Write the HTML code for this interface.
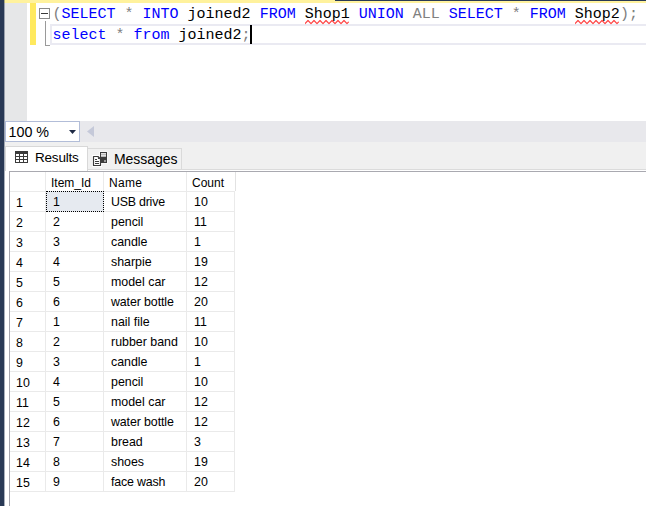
<!DOCTYPE html><html><head><meta charset="utf-8"><title>Query</title><style>
html,body{margin:0;padding:0;}
body{width:646px;height:506px;position:relative;overflow:hidden;background:#fff;font-family:"Liberation Sans",sans-serif;color:#000;}
div,span{position:absolute;box-sizing:border-box;}
.frame{left:0;top:0;width:4px;height:506px;background:#293955;}
.frame2{left:4px;top:0;width:1px;height:506px;background:rgba(41,57,85,0.4);}
.topy{left:4px;top:0;width:642px;height:3px;background:#fff29d;}
.topd{left:335px;top:0;width:311px;height:1px;background:#293955;}
.margin{left:4px;top:3px;width:22.5px;height:118px;background:#e6e7e8;}
.chg{left:29.5px;top:3px;width:6.5px;height:42px;background:#ffe95e;}
.obox{left:39px;top:8px;width:11px;height:11px;border:1px solid #8a8a8a;background:#fff;}
.ominus{left:41px;top:12.5px;width:7px;height:1.5px;background:#3a3a3a;}
.ovl{left:45px;top:21px;width:1px;height:25px;background:#9a9a9a;}
.ohl{left:45px;top:45px;width:5px;height:1px;background:#9a9a9a;}
.curline{left:50px;top:24px;width:600px;height:21px;border:2px solid #eaeaf2;background:#fff;}
.code{font-family:"Liberation Mono",monospace;font-size:15px;line-height:21px;white-space:pre;left:52.5px;height:21px;}
.l1{top:4px}.l2{top:25px}
.k{position:static;color:#0000ff}.g{position:static;color:#808080}.t{position:static;color:#000}
.caret{left:250.4px;top:24.6px;width:1.3px;height:19px;background:#000;}
.zoombar{left:4px;top:121px;width:642px;height:21px;background:#e8e8ec;}
.zoomgap{left:4px;top:142px;width:642px;height:5px;background:#f0f0f0;}
.combo{left:5px;top:121px;width:75px;height:21px;border:1px solid #b2bdd8;background:#fff;}
.combotxt{left:8.5px;top:124px;font-size:14.3px;line-height:17px;white-space:pre;}
.tabstrip{left:5px;top:147px;width:641px;height:22px;background:#f0f0f0;}
.tabline{left:88px;top:169px;width:558px;height:1px;background:#dbdbdb;}
.tabline2{left:5px;top:170px;width:641px;height:1px;background:#fff;}
.tab1{left:5px;top:146px;width:83px;height:25px;background:#fff;border:1px solid #d8d8d8;border-bottom:none;}
.tab2{left:88px;top:148px;width:94px;height:21px;background:#f1f1f1;border:1px solid #dadada;border-left:none;border-bottom:none;}
.tabtxt{font-size:13px;line-height:16px;white-space:pre;}
.grid{left:5px;top:171px;width:641px;height:335px;background:#fff;}
.gtop{left:9px;top:171px;width:637px;height:1px;background:#a9a9b0;}
.gleft{left:9px;top:171px;width:1px;height:335px;background:#a6a6ae;}
.hl{height:1px;left:10px;width:225px;background:#eaeaea;}
.vl{width:1px;top:172px;height:320px;background:#eaeaea;}
.c{font-size:12px;line-height:14px;white-space:pre;}
.d{font-size:12.4px}
.sel{left:46px;top:191px;width:58px;height:21px;background:#e6eaf0;border:1px dotted #000;}
</style></head><body>
<div class="topy"></div><div class="topd"></div>
<div class="margin"></div><div class="chg"></div>
<div class="curline"></div>
<div class="obox"></div><div class="ominus"></div><div class="ovl"></div><div class="ohl"></div>
<div class="code l1"><span class="g">(</span><span class="k">SELECT</span> <span class="g">*</span> <span class="k">INTO</span> <span class="t">joined2</span> <span class="k">FROM</span> <span class="t">Shop1</span> <span class="k">UNION</span> <span class="g">ALL</span> <span class="k">SELECT</span> <span class="g">*</span> <span class="k">FROM</span> <span class="t">Shop2</span><span class="g">);</span></div>
<div class="code l2"><span class="k">select</span> <span class="g">*</span> <span class="k">from</span> <span class="t">joined2</span><span class="g">;</span></div>
<svg style="position:absolute;left:305.3px;top:19px" width="43.4" height="6" viewBox="0 0 43.4 6"><path d="M0 4.6 L3 1.5 L6 4.6 L9 1.5 L12 4.6 L15 1.5 L18 4.6 L21 1.5 L24 4.6 L27 1.5 L30 4.6 L33 1.5 L36 4.6 L39 1.5 L42 4.6 L43.4 3.2" fill="none" stroke="#ff4545" stroke-width="1.2" stroke-linejoin="round" stroke-linecap="round"/></svg>
<svg style="position:absolute;left:575.3px;top:19px" width="43.4" height="6" viewBox="0 0 43.4 6"><path d="M0 4.6 L3 1.5 L6 4.6 L9 1.5 L12 4.6 L15 1.5 L18 4.6 L21 1.5 L24 4.6 L27 1.5 L30 4.6 L33 1.5 L36 4.6 L39 1.5 L42 4.6 L43.4 3.2" fill="none" stroke="#ff4545" stroke-width="1.2" stroke-linejoin="round" stroke-linecap="round"/></svg>
<div class="caret"></div>
<div class="zoombar"></div><div class="zoomgap"></div><div class="combo"></div><div class="combotxt">100 %</div>
<svg style="position:absolute;left:69px;top:130px" width="7" height="4" viewBox="0 0 7 4"><path d="M0 0H7L3.5 4Z" fill="#1e2a45"/></svg>
<svg style="position:absolute;left:87px;top:126px" width="7" height="11" viewBox="0 0 7 11"><path d="M7 0V11L0 5.5Z" fill="#c5c9d9"/></svg>
<div class="tabstrip"></div><div class="tabline"></div><div class="tabline2"></div><div class="tab1"></div><div class="tab2"></div>
<svg style="position:absolute;left:15px;top:151px" width="13" height="12" viewBox="0 0 13 12"><rect x="0" y="0" width="13" height="12" fill="#3b3b3b"/><g fill="#fff"><rect x="1" y="3" width="3" height="2"/><rect x="5" y="3" width="3" height="2"/><rect x="9" y="3" width="3" height="2"/><rect x="1" y="6" width="3" height="2"/><rect x="5" y="6" width="3" height="2"/><rect x="9" y="6" width="3" height="2"/><rect x="1" y="9" width="3" height="2"/><rect x="5" y="9" width="3" height="2"/><rect x="9" y="9" width="3" height="2"/></g></svg>
<div class="tabtxt" style="left:35px;top:149.5px;font-size:13.5px;letter-spacing:-0.2px">Results</div>
<svg style="position:absolute;left:91px;top:150px" width="18" height="18" viewBox="91 150 18 18"><rect x="99.2" y="151.2" width="8.6" height="12.6" fill="#fafafa"/><path d="M93.5 156.5H98L100.5 159V165.5H93.5Z" fill="none" stroke="#fff" stroke-width="3"/><rect x="100" y="152" width="7" height="11" fill="#3c3c3c"/><rect x="101" y="153.15" width="5" height="1.5" fill="#fff"/><rect x="101" y="155.15" width="5" height="1.5" fill="#fff"/><rect x="104.3" y="160.3" width="1.4" height="1.4" fill="#fff"/><path d="M93.5 156.5H98L100.5 159V165.5H93.5Z" fill="#fff" stroke="#3c3c3c" stroke-width="1.2" stroke-linejoin="round"/><path d="M97.8 156.8L98 159H100.2Z" fill="#3c3c3c"/><path d="M95 159.5H97M95 161.5H99M95 163.5H99" stroke="#3c3c3c" stroke-width="1.1"/></svg>
<div class="tabtxt" style="left:114px;top:151px;font-size:14px;letter-spacing:-0.05px">Messages</div>
<div class="grid"></div><div class="gtop"></div><div class="gleft"></div>
<div class="hl" style="top:191px"></div>
<div class="hl" style="top:211px"></div>
<div class="hl" style="top:231px"></div>
<div class="hl" style="top:251px"></div>
<div class="hl" style="top:271px"></div>
<div class="hl" style="top:291px"></div>
<div class="hl" style="top:311px"></div>
<div class="hl" style="top:331px"></div>
<div class="hl" style="top:351px"></div>
<div class="hl" style="top:371px"></div>
<div class="hl" style="top:391px"></div>
<div class="hl" style="top:411px"></div>
<div class="hl" style="top:431px"></div>
<div class="hl" style="top:451px"></div>
<div class="hl" style="top:471px"></div>
<div class="hl" style="top:491px"></div>
<div class="vl" style="left:45px"></div>
<div class="vl" style="left:103px"></div>
<div class="vl" style="left:186px"></div>
<div class="vl" style="left:234px;top:191px;height:301px"></div>
<div class="vl" style="left:235px;top:172px;height:19px;background:#e2e2e2"></div>
<div class="sel"></div>
<div class="c" style="left:51px;top:176px">Item_Id</div><div class="c" style="left:109px;top:176px;letter-spacing:0.3px">Name</div><div class="c" style="left:192px;top:176px">Count</div>
<div class="c d" style="left:16px;top:196px">1</div><div class="c d" style="left:53px;top:195px">1</div><div class="c d" style="left:111px;top:195px;letter-spacing:-0.22px">USB drive</div><div class="c d" style="left:194px;top:195px">10</div>
<div class="c d" style="left:16px;top:216px">2</div><div class="c d" style="left:53px;top:215px">2</div><div class="c d" style="left:111px;top:215px">pencil</div><div class="c d" style="left:194px;top:215px">11</div>
<div class="c d" style="left:16px;top:236px">3</div><div class="c d" style="left:53px;top:235px">3</div><div class="c d" style="left:111px;top:235px">candle</div><div class="c d" style="left:194px;top:235px">1</div>
<div class="c d" style="left:16px;top:256px">4</div><div class="c d" style="left:53px;top:255px">4</div><div class="c d" style="left:111px;top:255px">sharpie</div><div class="c d" style="left:194px;top:255px">19</div>
<div class="c d" style="left:16px;top:276px">5</div><div class="c d" style="left:53px;top:275px">5</div><div class="c d" style="left:111px;top:275px">model car</div><div class="c d" style="left:194px;top:275px">12</div>
<div class="c d" style="left:16px;top:296px">6</div><div class="c d" style="left:53px;top:295px">6</div><div class="c d" style="left:111px;top:295px;letter-spacing:-0.11px">water bottle</div><div class="c d" style="left:194px;top:295px">20</div>
<div class="c d" style="left:16px;top:316px">7</div><div class="c d" style="left:53px;top:315px">1</div><div class="c d" style="left:111px;top:315px">nail file</div><div class="c d" style="left:194px;top:315px">11</div>
<div class="c d" style="left:16px;top:336px">8</div><div class="c d" style="left:53px;top:335px">2</div><div class="c d" style="left:111px;top:335px">rubber band</div><div class="c d" style="left:194px;top:335px">10</div>
<div class="c d" style="left:16px;top:356px">9</div><div class="c d" style="left:53px;top:355px">3</div><div class="c d" style="left:111px;top:355px">candle</div><div class="c d" style="left:194px;top:355px">1</div>
<div class="c d" style="left:16px;top:376px">10</div><div class="c d" style="left:53px;top:375px">4</div><div class="c d" style="left:111px;top:375px">pencil</div><div class="c d" style="left:194px;top:375px">10</div>
<div class="c d" style="left:16px;top:396px">11</div><div class="c d" style="left:53px;top:395px">5</div><div class="c d" style="left:111px;top:395px">model car</div><div class="c d" style="left:194px;top:395px">12</div>
<div class="c d" style="left:16px;top:416px">12</div><div class="c d" style="left:53px;top:415px">6</div><div class="c d" style="left:111px;top:415px;letter-spacing:-0.11px">water bottle</div><div class="c d" style="left:194px;top:415px">12</div>
<div class="c d" style="left:16px;top:436px">13</div><div class="c d" style="left:53px;top:435px">7</div><div class="c d" style="left:111px;top:435px">bread</div><div class="c d" style="left:194px;top:435px">3</div>
<div class="c d" style="left:16px;top:456px">14</div><div class="c d" style="left:53px;top:455px">8</div><div class="c d" style="left:111px;top:455px">shoes</div><div class="c d" style="left:194px;top:455px">19</div>
<div class="c d" style="left:16px;top:476px">15</div><div class="c d" style="left:53px;top:475px">9</div><div class="c d" style="left:111px;top:475px;letter-spacing:-0.17px">face wash</div><div class="c d" style="left:194px;top:475px">20</div>
<div class="frame"></div><div class="frame2"></div>
</body></html>
